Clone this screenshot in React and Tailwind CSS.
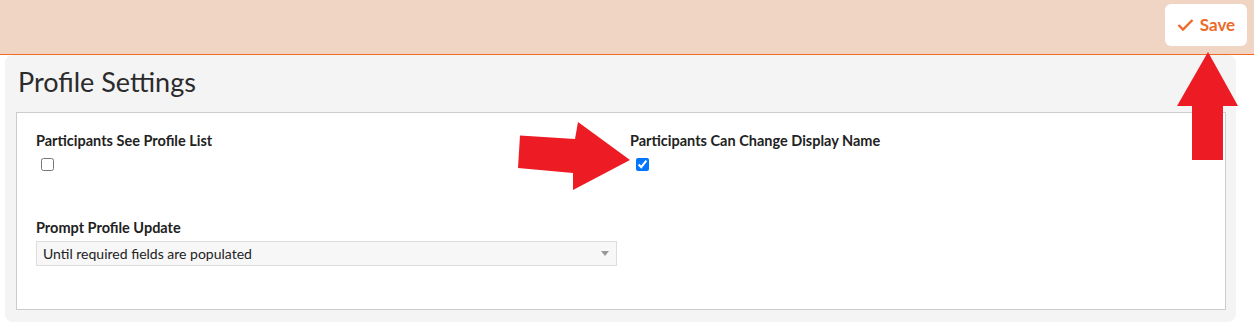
import React from "react";

function Arrows() {
  return (
    <svg className="absolute left-0 top-0 pointer-events-none" width="1254" height="327">
      <polygon
        fill="#ed1c24"
        points="520,135.5 575,139 578,122 630,160 573,190 573,173 518,168"
      />
      <polygon
        fill="#ed1c24"
        points="1208,52 1238,106 1223,106 1223,160 1192,160 1192,106 1177,106"
      />
    </svg>
  );
}

function App() {
  return (
    <div className="relative w-[1254px] h-[327px] bg-white font-['Lato','Noto_Sans',sans-serif] text-[#333]">
      <div className="h-[55px] bg-[#f0d5c5] border-b-[1.5px] border-b-[#f26a21] flex justify-end pt-[4px] pr-[7px]">
        <button className="w-[82px] h-[42px] bg-white rounded-[6px] flex items-center justify-center gap-[6px] text-[#ee6a28] font-bold text-[17px]">
          <svg width="17" height="14" viewBox="0 0 17 14" fill="none">
            <path d="M1.5 7 L6 11.5 L15.5 2" stroke="#ee6a28" strokeWidth="2.4" />
          </svg>
          Save
        </button>
      </div>

      <div className="ml-[5px] w-[1231px] h-[267px] bg-[#f4f4f4] rounded-[8px] pl-[11px] pr-[10px] pt-[9px]">
        <h1 className="ml-[2px] text-[27px] leading-[35px] text-[#2b2b2b]">Profile Settings</h1>
        <div className="mt-[13px] h-[198px] bg-white border border-[#cccccc] px-[19px] pt-[19px]">
          <div className="grid grid-cols-[594px_1fr]">
            <div>
              <div className="font-bold text-[14.5px] leading-[17px] text-[#222]">Participants See Profile List</div>
              <input type="checkbox" readOnly className="block ml-[5px] mt-[9px] w-[13px] h-[13px]" />
            </div>
            <div>
              <div className="font-bold text-[14.5px] leading-[17px] text-[#222]">Participants Can Change Display Name</div>
              <input type="checkbox" readOnly checked className="block ml-[6px] mt-[9px] w-[13px] h-[13px]" />
            </div>
          </div>
          <div className="mt-[48px] font-bold text-[14.5px] leading-[17px] text-[#222]">Prompt Profile Update</div>
          <div className="mt-[5px] w-[581px] h-[25px] bg-[#f7f7f7] border border-[#dddddd] flex items-center justify-between pl-[6px] pr-[7px] text-[14px] text-[#222]">
            <span>Until required fields are populated</span>
            <span className="w-0 h-0 border-l-[4px] border-r-[4px] border-t-[5px] border-l-transparent border-r-transparent border-t-[#999]" />
          </div>
        </div>
      </div>

      <Arrows />
    </div>
  );
}

export default App;
